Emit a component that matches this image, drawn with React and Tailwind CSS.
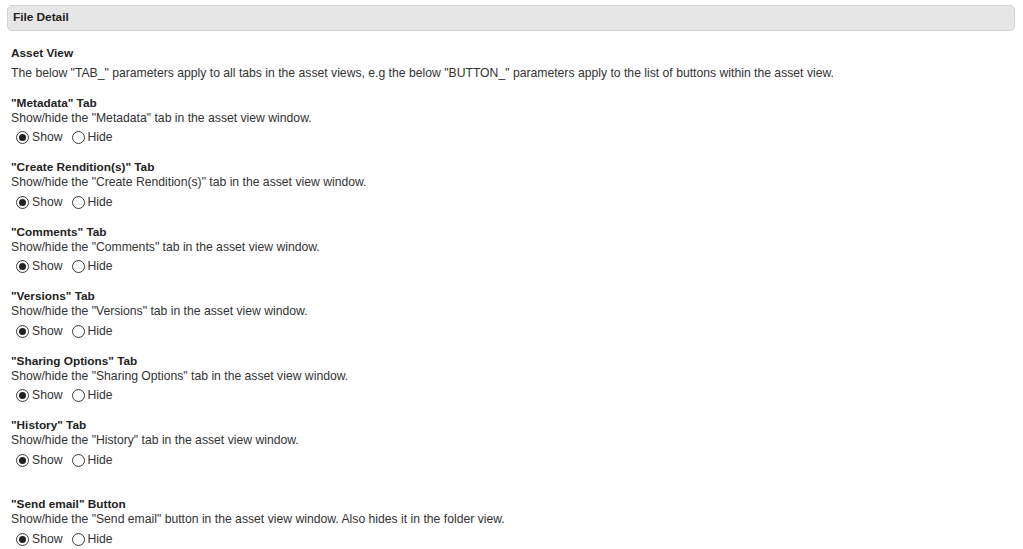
import React from "react";

const sections = [
  ["\"Metadata\" Tab", "Show/hide the \"Metadata\" tab in the asset view window."],
  ["\"Create Rendition(s)\" Tab", "Show/hide the \"Create Rendition(s)\" tab in the asset view window."],
  ["\"Comments\" Tab", "Show/hide the \"Comments\" tab in the asset view window."],
  ["\"Versions\" Tab", "Show/hide the \"Versions\" tab in the asset view window."],
  ["\"Sharing Options\" Tab", "Show/hide the \"Sharing Options\" tab in the asset view window."],
  ["\"History\" Tab", "Show/hide the \"History\" tab in the asset view window."],
];

function Radio({ checked }) {
  return (
    <span className="inline-flex h-[13px] w-[13px] items-center justify-center rounded-full border border-[#3a3a3a] bg-white">
      {checked && <span className="h-[7px] w-[7px] rounded-full bg-[#222]" />}
    </span>
  );
}

function Section({ title, desc, className = "" }) {
  return (
    <div className={className}>
      <div className="h-[15px] text-[11.8px] font-bold leading-[15px] text-[#222]">{title}</div>
      <div className="h-[15px] leading-[15px]">{desc}</div>
      <div className="mt-[3px] flex h-[18px] items-center pl-[5px]">
        <Radio checked />
        <span className="ml-[3px]">Show</span>
        <span className="ml-[9px] flex"><Radio /></span>
        <span className="ml-[3px]">Hide</span>
      </div>
    </div>
  );
}

export default function App() {
  return (
    <div
      className="min-h-[549px] bg-white text-[12.2px] text-[#333]"
      style={{ fontFamily: '"Liberation Sans", Arial, sans-serif' }}
    >
      <div className="pt-[5px] pl-[7px] pr-[8px]">
        <div className="flex h-[26px] items-center rounded-[5px] border border-[#d2d2d2] bg-[#e6e6e6] pl-[5px] text-[11.8px] font-bold text-[#222]">
          File Detail
        </div>
      </div>
      <div className="pl-[11px] pt-[14.5px]">
        <div className="h-[15px] text-[11.8px] font-bold leading-[15px] text-[#222]">Asset View</div>
        <div className="mt-[5px] h-[15px] leading-[15px]">
          The below "TAB_" parameters apply to all tabs in the asset views, e.g the below "BUTTON_" parameters apply to the list of buttons within the asset view.
        </div>
        <div className="mt-[15px] flex flex-col">
          {sections.map(([t, d]) => (
            <Section key={t} title={t} desc={d} className="mb-[13.5px]" />
          ))}
          <Section
            className="mt-[14.5px]"
            title={"\"Send email\" Button"}
            desc={"Show/hide the \"Send email\" button in the asset view window. Also hides it in the folder view."}
          />
        </div>
      </div>
    </div>
  );
}
